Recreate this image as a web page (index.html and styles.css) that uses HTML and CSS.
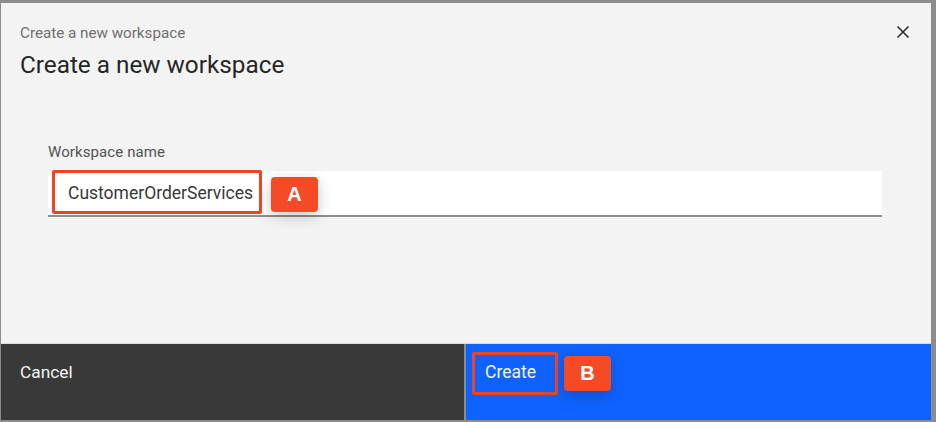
FILE: index.html
```html
<!DOCTYPE html>
<html lang="en">
<head>
<meta charset="utf-8">
<title>Create a new workspace</title>
<link rel="stylesheet" href="styles.css">
</head>
<body>
<div class="modal">
  <div class="header">
    <div class="header-text">
      <p class="eyebrow">Create a new workspace</p>
      <h2 class="title">Create a new workspace</h2>
    </div>
    <button class="close" aria-label="Close">
      <svg width="20" height="20" viewBox="0 0 20 20"><path d="M4.5 4.5 L15.5 15.5 M15.5 4.5 L4.5 15.5" stroke="#262626" stroke-width="1.5" fill="none"/></svg>
    </button>
  </div>
  <div class="content">
    <label class="field-label">Workspace name</label>
    <div class="input">
      <span class="input-value">CustomerOrderServices</span>
      <span class="mark mark-a"></span>
      <span class="badge badge-a">A</span>
    </div>
  </div>
  <div class="footer">
    <button class="btn btn-secondary">Cancel</button>
    <div class="divider"></div>
    <button class="btn btn-primary">
      <span class="btn-label">Create</span>
      <span class="mark mark-b"></span>
      <span class="badge badge-b">B</span>
    </button>
  </div>
</div>
</body>
</html>
```

FILE: styles.css
```css
* { box-sizing: border-box; }
html, body { margin: 0; height: 100%; }
body {
  background: #8c8c8c;
  padding: 3px 5px 2px 1px;
  font-family: "Roboto", "Noto Sans", sans-serif;
}
.modal {
  height: 417px;
  background: #f3f3f3;
  display: flex;
  flex-direction: column;
}
.header {
  display: flex;
  justify-content: space-between;
  padding: 22px 18px 0 19px;
  height: 100px;
}
.eyebrow {
  margin: 0;
  font-size: 15.2px;
  line-height: 16px;
  color: #6f6f6f;
}
.title {
  margin: 10px 0 0;
  font-size: 24.3px;
  line-height: 28px;
  font-weight: 400;
  color: #262626;
}
.close {
  border: 0;
  background: none;
  padding: 0;
  width: 20px;
  height: 20px;
  margin-top: -3px;
  cursor: pointer;
}
.content {
  flex: 1;
  padding: 41px 49px 0 47px;
}
.field-label {
  display: block;
  font-size: 15px;
  line-height: 16px;
  color: #525252;
  letter-spacing: 0.1px;
}
.input {
  position: relative;
  margin-top: 11px;
  height: 46px;
  background: #fff;
  border-bottom: 2px solid #8d8d8d;
  display: flex;
  align-items: center;
  padding-left: 20px;
}
.input-value {
  font-size: 17.5px;
  color: #393939;
}
.mark {
  position: absolute;
  border: 3px solid #ee4424;
  border-radius: 2px;
}
.mark-a { left: 4px; top: -1px; width: 210px; height: 44px; }
.badge {
  position: absolute;
  width: 47px;
  height: 35px;
  background: #f44b26;
  color: #fff;
  font-family: "Liberation Sans", Arial, sans-serif;
  font-weight: 700;
  font-size: 20px;
  display: flex;
  align-items: center;
  justify-content: center;
  border-radius: 4px;
  box-shadow: 0 4px 14px rgba(0,0,0,0.22);
}
.badge-a { left: 223px; top: 6px; }
.footer {
  height: 77px;
  display: flex;
  border-top: 1px solid #dcdcdc;
}
.btn {
  position: relative;
  border: 0;
  font-family: inherit;
  font-size: 17.3px;
  text-align: left;
  padding: 0 0 0 19px;
  display: flex;
  align-items: flex-start;
  padding-top: 18px;
  cursor: pointer;
}
.btn-secondary {
  width: 463px;
  background: #393939;
  color: #f4f4f4;
}
.divider {
  width: 2px;
  background: #8d8d8d;
}
.btn-primary {
  flex: 1;
  background: #0f62fe;
  color: #f4f4f4;
}
.btn-primary .btn-label { font-size: 17.5px; }
.mark-b { left: 6px; top: 8px; width: 86px; height: 43px; }
.badge-b { left: 98px; top: 12px; }
```
